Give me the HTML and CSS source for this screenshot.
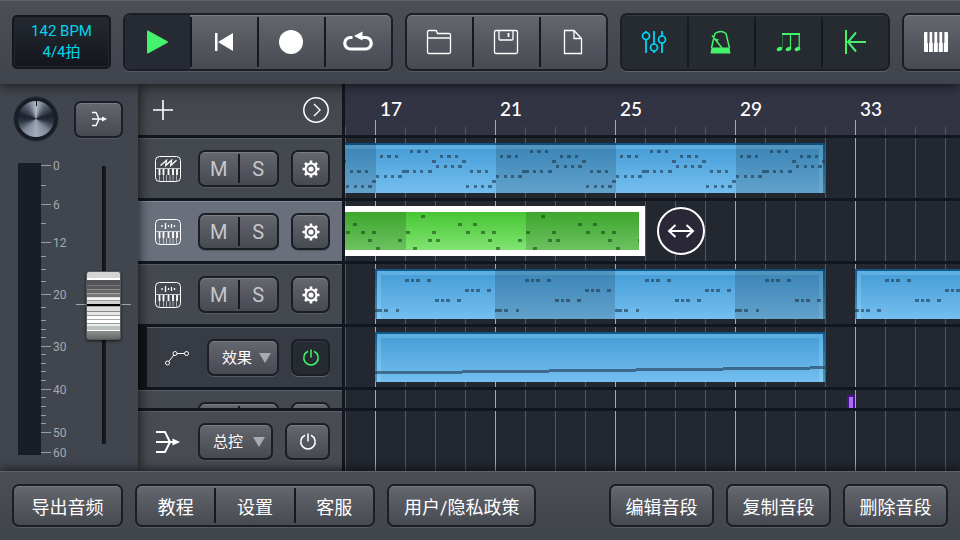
FILE: index.html
```html
<!DOCTYPE html>
<html lang="zh-CN">
<head>
  <meta charset="UTF-8">
  <meta name="viewport" content="width=device-width, initial-scale=1.0">
  <title>编曲</title>
  <link rel="stylesheet" href="styles.css">
</head>
<body>
  <!-- shared icons -->
  <svg class="sprite" aria-hidden="true">
    <symbol id="gear" viewBox="0 0 20 20">
      <circle cx="10" cy="10" r="5.500" fill="none" stroke="#fff" stroke-width="2.200"/>
      <circle cx="10" cy="10" r="2.600" fill="#fff"/>
      <path d="M10 1.500v3M10 15.500v3M1.500 10h3M15.500 10h3M4 4l2 2M14 14l2 2M16 4l-2 2M6 14l-2 2" stroke="#fff" stroke-width="2.600"/>
    </symbol>
    <symbol id="power" viewBox="0 0 20 20">
      <path d="M7 3.200A7.200 7.200 0 1 0 13 3.200M10 1.500v8" fill="none" stroke="currentColor" stroke-width="1.500"/>
    </symbol>
    <symbol id="keys" viewBox="0 0 26 26">
      <rect x=".5" y=".5" width="25" height="25" rx="4" fill="none" stroke="#fff"/>
      <path d="M1 12.500h24" stroke="#fff" stroke-opacity=".7"/>
      <path d="M4.500 19v6M8.500 13v12M11.500 19v6M15 19v6M18 13v12M21.500 19v6" stroke="#fff" stroke-opacity=".55"/>
      <path d="M4.500 13v6M8.500 13v6M13.500 13v6M18 13v6M22 13v6" stroke="#fff" stroke-width="1.800"/>
    </symbol>
    <symbol id="drum" viewBox="0 0 26 26">
      <use href="#keys"/>
      <path d="M7 6v2M10.500 4v6M13.500 6v2M16.500 5v4M19.500 6v2" stroke="#fff" stroke-width="1.300"/>
    </symbol>
    <symbol id="synth" viewBox="0 0 26 26">
      <use href="#keys"/>
      <path d="M5.500 9.500l6-5.200-.8 5.200 5.800-5.200-.8 5.200 5.800-5.200" fill="none" stroke="#fff" stroke-width="1.300"/>
    </symbol>
  </svg>

  <header class="toolbar">
    <button class="tempo" type="button"><span>142 BPM</span><span>4/4拍</span></button>

    <div class="group">
      <button class="on" type="button" aria-label="播放">
        <svg width="22" height="24"><path d="M1 1.500v21q0 1.500 1.500.8l19-10.500q.8-.8 0-1.600L2.500.7Q1 0 1 1.500z" fill="#44f36b"/></svg>
      </button>
      <button type="button" aria-label="回到开头">
        <svg width="20" height="20"><path d="M1 1h2.500v18H1zM4 10L19 1v18z" fill="#fff"/></svg>
      </button>
      <button type="button" aria-label="录音">
        <svg width="24" height="24"><circle cx="12" cy="12" r="12" fill="#fff"/></svg>
      </button>
      <button type="button" aria-label="循环">
        <svg width="32" height="22"><path d="M10.500 6.500h-2a5.750 5.750 0 0 0 0 11.500h15a5.750 5.750 0 0 0 0-11.500H19" fill="none" stroke="#fff" stroke-width="3.200"/><path d="M12 5L20.500.5v9z" fill="#fff"/></svg>
      </button>
    </div>

    <div class="group">
      <button type="button" aria-label="打开">
        <svg width="26" height="26"><path d="M1.500 9V3q0-1.500 1.500-1.500h6.500q1 0 1.300 1l.7 2H23q1.500 0 1.500 1.500v17q0 1.500-1.500 1.500H3q-1.500 0-1.500-1.500zh23" fill="none" stroke="#fff" stroke-width="1.300"/></svg>
      </button>
      <button type="button" aria-label="保存">
        <svg width="26" height="26"><path d="M3 1.500h20q1.500 0 1.500 1.500v20q0 1.500-1.500 1.500H3q-1.500 0-1.500-1.500V3Q1.500 1.500 3 1.500zM6 1.500V10q0 1 1 1h12q1 0 1-1V1.500" fill="none" stroke="#fff" stroke-width="1.300"/><path d="M15.500 4v4" stroke="#fff" stroke-width="1.800"/></svg>
      </button>
      <button type="button" aria-label="新建">
        <svg width="20" height="26"><path d="M1.500 1.500H11l7.500 8v15h-17zM11 1.500v8h7.500" fill="none" stroke="#fff" stroke-width="1.300"/></svg>
      </button>
    </div>

    <div class="group toggles">
      <button class="cyan" type="button" aria-label="混音">
        <svg width="26" height="26"><g fill="none" stroke="currentColor" stroke-width="1.700"><path d="M5 2v1M5 11v13M13 2v13M13 22v2M21 2v5M21 14v10"/><circle cx="5" cy="7" r="3.500"/><circle cx="13" cy="18.500" r="3.500"/><circle cx="21" cy="10.500" r="3.500"/></g></svg>
      </button>
      <button type="button" aria-label="节拍器">
        <svg width="22" height="26"><path d="M4.200 7.500l.8-3Q11 .5 16 4.500L19.500 19M3.500 10L1.500 19M2 6.500L12 19" fill="none" stroke="currentColor" stroke-width="1.500"/><path d="M5 9.500l4 1-2.500 2.800zM1.500 18.500h18l1 6H.5z" fill="currentColor"/></svg>
      </button>
      <button type="button" aria-label="节奏">
        <svg width="26" height="22"><path d="M7 3h18" stroke="currentColor" stroke-width="2"/><path d="M7.500 3v14" stroke="currentColor" stroke-opacity=".35"/><path d="M15.500 3v14M24.200 3v14" stroke="currentColor" stroke-width="1.200"/><g fill="currentColor"><ellipse cx="4.500" cy="18" rx="2.900" ry="2" transform="rotate(-25 4.500 18)"/><ellipse cx="13.500" cy="18" rx="2.900" ry="2" transform="rotate(-25 13.500 18)"/><ellipse cx="22.500" cy="18" rx="2.900" ry="2" transform="rotate(-25 22.500 18)"/></g></svg>
      </button>
      <button type="button" aria-label="自动返回">
        <svg width="22" height="26"><path d="M2 1v24M22 13H4M12 3.500L4 13l8 9.500" fill="none" stroke="currentColor" stroke-width="2"/></svg>
      </button>
    </div>

    <div class="group">
      <button type="button" aria-label="键盘">
        <svg width="24" height="20"><path d="M1 0h22q1 0 1 1v18q0 1-1 1H1q-1 0-1-1V1q0-1 1-1z" fill="#fff"/><path d="M4.500 11v9M9.300 11v9M14.300 11v9M19.300 11v9" stroke="#53565e"/><path d="M4.500 0v11M9.300 0v11M14.300 0v11M19.300 0v11" stroke="#60636a" stroke-width="2.200"/></svg>
      </button>
    </div>
  </header>

  <main class="studio">
    <section class="strip">
      <div class="strip-top">
        <input class="knob" type="range" aria-label="声像">
        <button class="btn out" type="button" aria-label="输出">
          <svg width="16" height="16"><path d="M1 1.500h4l3 6.500-3 6.500H1M1 8h11" fill="none" stroke="#fff" stroke-width="1.400"/><path d="M11 5.500L16 8l-5 2.500z" fill="#fff"/></svg>
        </button>
      </div>
      <div class="strip-fader">
        <div class="meter"></div>
        <svg class="scale" width="30" height="300" id="scale"></svg>
        <input class="fader" type="range" value="50" aria-label="音量">
      </div>
    </section>

    <section class="tracks">
      <div class="tracks-head">
        <button class="plain" type="button" aria-label="添加音轨">
          <svg width="20" height="20"><path d="M0 10h20M10 0v20" stroke="#fff" stroke-width="1.600"/></svg>
        </button>
        <button class="plain" type="button" aria-label="展开">
          <svg width="26" height="26"><circle cx="13" cy="13" r="12.200" fill="none" stroke="#fff" stroke-width="1.500"/><path d="M11 7l6 6-6 6" fill="none" stroke="#fff" stroke-width="1.400"/></svg>
        </button>
      </div>

      <div class="tracks-list">
        <div class="track">
          <svg width="26" height="26"><use href="#synth"/></svg>
          <div class="group ms"><button type="button">M</button><button type="button">S</button></div>
          <button class="btn small" type="button" aria-label="音轨设置"><svg width="20" height="20"><use href="#gear"/></svg></button>
        </div>
        <div class="track selected">
          <svg width="26" height="26"><use href="#drum"/></svg>
          <div class="group ms"><button type="button">M</button><button type="button">S</button></div>
          <button class="btn small" type="button" aria-label="音轨设置"><svg width="20" height="20"><use href="#gear"/></svg></button>
        </div>
        <div class="track">
          <svg width="26" height="26"><use href="#drum"/></svg>
          <div class="group ms"><button type="button">M</button><button type="button">S</button></div>
          <button class="btn small" type="button" aria-label="音轨设置"><svg width="20" height="20"><use href="#gear"/></svg></button>
        </div>
        <div class="track automation">
          <svg width="26" height="26"><g fill="none" stroke="#fff"><circle cx="3.500" cy="18" r="2"/><circle cx="11" cy="8.500" r="2"/><circle cx="22.500" cy="8.500" r="2"/><path d="M4.800 16.400l5-6.300M13 8.500h7.500"/></g></svg>
          <div class="picker"><select aria-label="自动化参数"><option>效果</option></select></div>
          <button class="btn small on" type="button" aria-label="启用自动化"><svg width="20" height="20"><use href="#power"/></svg></button>
        </div>
        <div class="track">
          <svg width="26" height="26"><use href="#drum"/></svg>
          <div class="group ms"><button type="button">M</button><button type="button">S</button></div>
          <button class="btn small" type="button" aria-label="音轨设置"><svg width="20" height="20"><use href="#gear"/></svg></button>
        </div>
      </div>

      <div class="track master">
        <svg width="26" height="26"><path d="M1 3h9l5 10-5 10H1M1 13h18" fill="none" stroke="#fff" stroke-width="2"/><path d="M17.500 9.500L25 13l-7.500 3.500z" fill="#fff"/></svg>
        <div class="picker"><select aria-label="总线"><option>总控</option></select></div>
        <button class="btn wide" type="button" aria-label="启用总控"><svg width="20" height="20"><use href="#power"/></svg></button>
      </div>
    </section>

    <section class="timeline">
      <div class="ruler" id="ruler"></div>
      <div class="lanes">
        <div class="lane" id="lane1"></div>
        <div class="lane" id="lane2">
          <button class="handle" type="button" aria-label="调整长度">
            <svg width="28" height="14"><path d="M2 7h24M8.500 1L2 7l6.500 6M19.500 1L26 7l-6.500 6" fill="none" stroke="#fff" stroke-width="2"/></svg>
          </button>
        </div>
        <div class="lane" id="lane3"></div>
        <div class="lane" id="lane4"></div>
        <div class="lane" id="lane5"></div>
      </div>
      <div class="lane-master"></div>
    </section>
  </main>

  <footer class="bottombar">
    <button class="btn" type="button">导出音频</button>
    <div class="group">
      <button type="button">教程</button>
      <button type="button">设置</button>
      <button type="button">客服</button>
    </div>
    <button class="btn" type="button">用户/隐私政策</button>
    <div class="edit">
      <button class="btn" type="button">编辑音段</button>
      <button class="btn" type="button">复制音段</button>
      <button class="btn" type="button">删除音段</button>
    </div>
  </footer>

  <script src="script.js"></script>
</body>
</html>
```
FILE: styles.css
```css
* {
  box-sizing: border-box;
}
body {
  margin: 0;
  height: 100vh;
  display: flex;
  flex-direction: column;
  overflow: hidden;
  background-color: #222730;
  color: #fff;
  font-family: Roboto, "Noto Sans CJK SC", sans-serif;
}
button, select {
  font: inherit;
  color: inherit;
  cursor: pointer;
}
svg {
  display: block;
  flex: none;
}
.sprite {
  position: absolute;
  width: 0;
  height: 0;
}

/* buttons */
.btn, .group, .picker select {
  border: 2px solid #1b1e26;
  border-radius: 7px;
  background: linear-gradient(#65686e, #5a5c64 35%, #464a51);
  box-shadow: inset 0 1px 0 #7b7d82, 0 1px 0 #565960;
}
.btn {
  display: flex;
  align-items: center;
  justify-content: center;
  flex: none;
  padding: 0;
}
.group {
  display: flex;
  flex: none;
  gap: 2px;
}
.group button {
  position: relative;
  display: flex;
  align-items: center;
  justify-content: center;
  padding: 0;
  border: 0;
  background: none;
}
.group button + button::before {
  content: "";
  position: absolute;
  left: -2px;
  top: 2px;
  bottom: 2px;
  width: 2px;
  background-color: #161920;
}
.group button.on {
  background-color: #262a32;
  border-radius: 5px 0 0 5px;
}
.btn.on, .toggles {
  background: #262a31;
  color: #44f36b;
  box-shadow: inset 0 1px 0 #343841, 0 1px 0 #60636a;
}
.plain {
  display: flex;
  padding: 0;
  border: 0;
  background: none;
}

/* top toolbar */
.toolbar {
  position: relative;
  z-index: 3;
  flex: none;
  display: flex;
  align-items: center;
  gap: 12px;
  height: 84px;
  padding: 0 12px;
  background: linear-gradient(#4c4f56, #3f434b);
  box-shadow: inset 0 1px 0 #5c5f65, 0 1px 12px rgba(0, 0, 0, 0.7);
}
.toolbar .group {
  height: 58px;
}
.toolbar .group button {
  width: 65px;
  padding-right: 2px;
}
.tempo {
  flex: none;
  display: flex;
  flex-direction: column;
  align-items: center;
  justify-content: center;
  width: 99px;
  height: 54px;
  padding: 0;
  border: 2px solid #14171c;
  border-radius: 5px;
  background: linear-gradient(#252a33, #13161b);
  box-shadow: inset 0 0 0 1px #23272d;
  font-size: 15px;
  line-height: 21px;
  color: #00d5ee;
}
.toggles .cyan {
  color: #00dcff;
}

/* middle */
.studio {
  flex: 1;
  min-height: 0;
  display: flex;
}

/* channel strip */
.strip {
  position: relative;
  z-index: 1;
  flex: none;
  width: 138px;
  padding: 12px 7px 0 14px;
  background-color: #41454d;
  box-shadow: 0 0 12px rgba(0, 0, 0, 0.8);
}
.strip-top {
  display: flex;
  align-items: center;
  justify-content: space-between;
  height: 46px;
  padding-right: 8px;
}
.out {
  width: 49px;
  height: 37px;
}
.knob {
  appearance: none;
  width: 44px;
  height: 44px;
  margin: 0;
  border: 4px solid #181d26;
  border-radius: 50%;
  outline: 1px solid #353941;
  background:
    linear-gradient(#10141a, #10141a) center top / 1px 5px no-repeat,
    conic-gradient(#b4bccb, #59616f 35deg, #1c222c 75deg, #2c3442 100deg, #7e8797 135deg, #a3abba 180deg, #7e8797 225deg, #2c3442 260deg, #1c222c 285deg, #59616f 325deg, #b4bccb);
}
.knob::-webkit-slider-thumb {
  appearance: none;
  width: 1px;
  height: 1px;
}
.strip-fader {
  display: flex;
  margin: 16px 0 0 4px;
}
.meter {
  flex: none;
  width: 23px;
  height: 292px;
  margin-top: 5px;
  background-color: #191d26;
}
.scale {
  font-size: 12px;
  fill: #a6a9ae;
}
.scale line {
  stroke: #9a9da2;
}
.fader {
  appearance: none;
  writing-mode: vertical-lr;
  direction: rtl;
  flex: none;
  width: 55px;
  height: 278px;
  margin: 8px 0 0 5px;
  background:
    linear-gradient(#a0a3a8, #a0a3a8) center 138px / 55px 1px no-repeat,
    linear-gradient(90deg, #0c0e12, #1c2026) center / 4px 100% no-repeat;
}
.fader::-webkit-slider-thumb {
  appearance: none;
  width: 35px;
  height: 69px;
  border: 1px solid #55585c;
  border-radius: 3px;
  background: linear-gradient(#d5d5d5 0 6px, #fff 6px 8px, #545359 8px 13px, #777 13px 14px, #58585c 14px 17px, #8b8b8d 17px 18px, #666 18px 21px, #aaa 21px 22px, #777 22px 25px, #ddd 25px 26px, #f5f5f5 26px 28px, #999 28px 29px, #cfd2d2 29px 32px, #000 32px 34px, #aaa 34px 35px, #ddd 35px 39px, #888 39px 40px, #e6e6e6 40px 43px, #999 43px 44px, #fff 44px 47px, #aaa 47px 48px, #fff 48px 51px, #999 51px 52px, #eee 52px 54px, #b9c0c0 54px 58px, #fff 58px 59px, #8c8e8f 59px, #66686a);
  box-shadow: 0 1px 3px rgba(0, 0, 0, 0.7);
}

/* track headers */
.tracks {
  flex: none;
  display: flex;
  flex-direction: column;
  width: 207px;
  border-right: 3px solid #12161e;
}
.tracks-head {
  flex: none;
  display: flex;
  align-items: center;
  justify-content: space-between;
  height: 54px;
  padding: 0 13px 0 15px;
  background: linear-gradient(#41444b, #484b51);
  border-bottom: 3px solid #12161e;
}
.tracks-list {
  flex: 1;
  min-height: 0;
  overflow: hidden;
}
.track {
  display: flex;
  align-items: center;
  height: 63px;
  padding: 1px 12px 0 17px;
  background-color: #44484f;
  border-bottom: 3px solid #12161e;
  box-shadow: inset 0 1px 0 #5a5d63;
}
.track > svg {
  margin-top: 1px;
}
.track.selected {
  background-color: #69707b;
  box-shadow: inset 0 1px 0 #858b94;
}
.ms {
  width: 81px;
  height: 37px;
  margin: 0 12px 0 17px;
  font-size: 20px;
  color: #c6c7c9;
}
.ms button {
  flex: 1;
}
.small {
  width: 39px;
  height: 37px;
}
.wide {
  width: 45px;
  height: 37px;
}
.track.automation {
  background-color: #373b43;
  border-left: 9px solid #12151a;
}
.picker {
  position: relative;
  flex: 1;
  margin: 0 12px 0 17px;
}
.picker select {
  appearance: none;
  display: block;
  width: 100%;
  height: 37px;
  padding: 0 0 0 13px;
  font-size: 15px;
}
.picker::after {
  content: "";
  position: absolute;
  right: 8px;
  top: 14px;
  width: 12px;
  height: 10px;
  background-color: #a8aaad;
  clip-path: polygon(0 0, 100% 0, 50% 100%);
  pointer-events: none;
}
.track.master {
  flex: none;
  border-top: 3px solid #12161e;
  border-bottom: 0;
  background: #484b52;
}

/* timeline, one bar is 30px */
.timeline {
  flex: 1;
  min-width: 0;
  display: flex;
  flex-direction: column;
  background:
    repeating-linear-gradient(90deg, transparent 0 30px, #a7a8ac 30px 31px, transparent 31px 120px),
    repeating-linear-gradient(90deg, #545759 0 1px, transparent 1px 30px),
    #222730;
}
.ruler {
  flex: none;
  display: flex;
  height: 54px;
  padding: 11px 0 0 30px;
  overflow: hidden;
  border-bottom: 3px solid #12161e;
  background:
    repeating-linear-gradient(90deg, transparent 0 30px, #a7a8ac 30px 31px, transparent 31px 120px) 0 36px no-repeat,
    repeating-linear-gradient(90deg, #545759 0 1px, transparent 1px 30px) 0 43px no-repeat,
    #323443;
  font-family: Lato, sans-serif;
  font-size: 19px;
  line-height: 28px;
  font-weight: 500;
}
.ruler span {
  flex: none;
  width: 120px;
  padding-left: 5px;
}
.lanes {
  flex: 1;
  min-height: 0;
  overflow: hidden;
}
.lane {
  position: relative;
  height: 63px;
  border-bottom: 3px solid #12161e;
}
.lane-master {
  flex: none;
  height: 63px;
  border-top: 3px solid #12161e;
}
.clip {
  position: absolute;
  top: 5px;
  height: 50px;
  padding: 2px;
  overflow: hidden;
  background: linear-gradient(#10588a, #4e95bd);
}
.clip::before {
  content: "";
  display: block;
  height: 100%;
  border: 4px solid rgba(165, 230, 255, 0.25);
  background: linear-gradient(#459cd6, #7ac3f3) border-box;
}
.clip.green {
  padding: 6px;
  background: #fff;
}
.clip.green::before {
  border: 0;
  background: linear-gradient(#48c534, #81e472);
}
.clip.purple {
  background: #4a1193;
}
.clip.purple::before {
  border: 0;
  background: #aa70ee;
}
.clip svg {
  position: absolute;
  left: 0;
  top: 0;
}
.clip.green svg {
  clip-path: inset(6px);
}
.shade {
  fill: rgba(0, 0, 0, 0.15);
}
.note {
  fill: rgba(30, 52, 72, 0.58);
}
.green .note {
  fill: rgba(25, 75, 25, 0.6);
}
.handle {
  position: absolute;
  left: 312px;
  top: 6px;
  display: flex;
  align-items: center;
  justify-content: center;
  width: 48px;
  height: 48px;
  padding: 0;
  border: 2px solid #fff;
  border-radius: 50%;
  background-color: rgba(43, 40, 56, 0.95);
}

/* bottom bar */
.bottombar {
  position: relative;
  z-index: 3;
  flex: none;
  display: flex;
  align-items: center;
  gap: 12px;
  height: 69px;
  padding: 0 12px;
  background: linear-gradient(#4c4f55, #3f434b);
  box-shadow: inset 0 1px 0 #5f6268, 0 -1px 10px rgba(0, 0, 0, 0.7);
  font-size: 18px;
}
.bottombar .btn, .bottombar .group {
  height: 43px;
}
.bottombar > .btn {
  min-width: 111px;
  padding: 0 15px;
}
.bottombar .group {
  width: 240px;
}
.bottombar .group button {
  flex: 1;
}
.edit {
  display: flex;
  gap: 12px;
  margin-left: auto;
}
.edit .btn {
  width: 105px;
}
```
FILE: script.js
```js
const BAR = 30;
const FIRST_BAR = 16;
const LOOP = 120;

// notes: [x, y, width] inside one loop
const lead = [
  [0, 32, 3], [8, 32, 3], [15, 32, 3], [22, 32, 4],
  [26, 27, 7], [37, 27, 3], [44, 27, 3], [52, 27, 4],
  [34, 7, 3], [41, 7, 4], [49, 7, 3],
  [4, 12, 3], [11, 12, 4], [19, 12, 3], [64, 12, 3], [71, 12, 4], [79, 12, 3],
  [56, 17, 4], [86, 17, 4],
  [60, 22, 3], [68, 22, 3], [75, 22, 3], [82, 22, 4],
  [94, 27, 3], [101, 27, 4], [109, 27, 3],
  [90, 42, 3], [98, 42, 3], [105, 42, 3], [112, 42, 4],
  [116, 37, 4]
];
const drums = [
  [15, 9, 4], [52, 17, 4], [67, 17, 4],
  [0, 25, 4], [26, 25, 4], [60, 25, 4], [75, 25, 4], [86, 25, 4],
  [22, 33, 4], [30, 33, 4], [82, 33, 4], [112, 33, 4],
  [7, 41, 4], [90, 41, 4]
];
const steps = [
  [30, 10, 4], [36, 10, 3], [41, 10, 4], [52, 10, 4],
  [90, 20, 4], [96, 20, 3], [101, 20, 4], [112, 20, 4],
  [60, 30, 4], [66, 30, 3], [71, 30, 4], [82, 30, 4]
];
const bass = steps.concat([[0, 40, 7], [9, 40, 4], [21, 40, 3]]);
const bass2 = steps.concat([[0, 40, 4], [6, 40, 3], [11, 40, 4], [22, 40, 4]]);
const curve = [[0, 39, 87], [87, 38, 87], [174, 37, 87], [261, 36, 87], [348, 35, 87], [435, 34, 15]];

// offset: where the loop starts in the clip, every second loop is shaded
const clips = [
  { lane: 'lane1', start: 12, end: 32, notes: lead, offset: 31 },
  { lane: 'lane2', start: 13, end: 26, notes: drums, offset: 31, color: 'green' },
  { lane: 'lane3', start: 17, end: 32, notes: bass, offset: 0 },
  { lane: 'lane3', start: 33, end: 41, notes: bass2, offset: 0 },
  { lane: 'lane4', start: 17, end: 32, notes: curve, once: true },
  { lane: 'lane5', start: 32 + 22 / BAR, end: 33, notes: [], once: true, color: 'purple' }
];

function rect(cls, x, y, w, h) {
  return `<rect class="${cls}" x="${x}" y="${y}" width="${w}" height="${h}"/>`;
}

function drawClip(clip) {
  const width = Math.round((clip.end - clip.start) * BAR);
  let shapes = '';
  if (clip.once) {
    clip.notes.forEach(n => shapes += rect('note', n[0], n[1], n[2], 3));
  } else {
    const first = clip.offset > 0 ? clip.offset - LOOP : 0;
    for (let x = first, i = 0; x < width; x += LOOP, i++) {
      if (i % 2 === 1) shapes += rect('shade', x, 0, LOOP, 50);
      clip.notes.forEach(n => shapes += rect('note', x + n[0], n[1], n[2], 3));
    }
  }
  const el = document.createElement('div');
  el.className = 'clip ' + (clip.color || '');
  el.style.left = Math.round((clip.start - FIRST_BAR) * BAR) + 'px';
  el.style.width = width + 'px';
  el.innerHTML = `<svg width="${width}" height="50">${shapes}</svg>`;
  document.getElementById(clip.lane).prepend(el);
}
clips.forEach(drawClip);

const ruler = document.getElementById('ruler');
for (let bar = FIRST_BAR + 1; (bar - FIRST_BAR + 1) * BAR < ruler.clientWidth; bar += 4) {
  ruler.insertAdjacentHTML('beforeend', `<span>${bar}</span>`);
}

// dB scale next to the meter
const major = { 0: 7, 6: 46, 12: 84, 20: 136, 30: 188, 40: 231, 50: 274, 60: 294 };
const minor = [27, 65, 98, 111, 123, 149, 162, 171, 179, 196, 205, 213, 222, 239, 248, 257, 265];
let marks = '';
for (const db in major) {
  const y = major[db] + 0.5;
  marks += `<line x1="0" x2="10" y1="${y}" y2="${y}"/><text x="12" y="${y + 4}">${db}</text>`;
}
minor.forEach(y => marks += `<line x1="0" x2="5" y1="${y + 0.5}" y2="${y + 0.5}"/>`);
document.getElementById('scale').innerHTML = marks;
```
